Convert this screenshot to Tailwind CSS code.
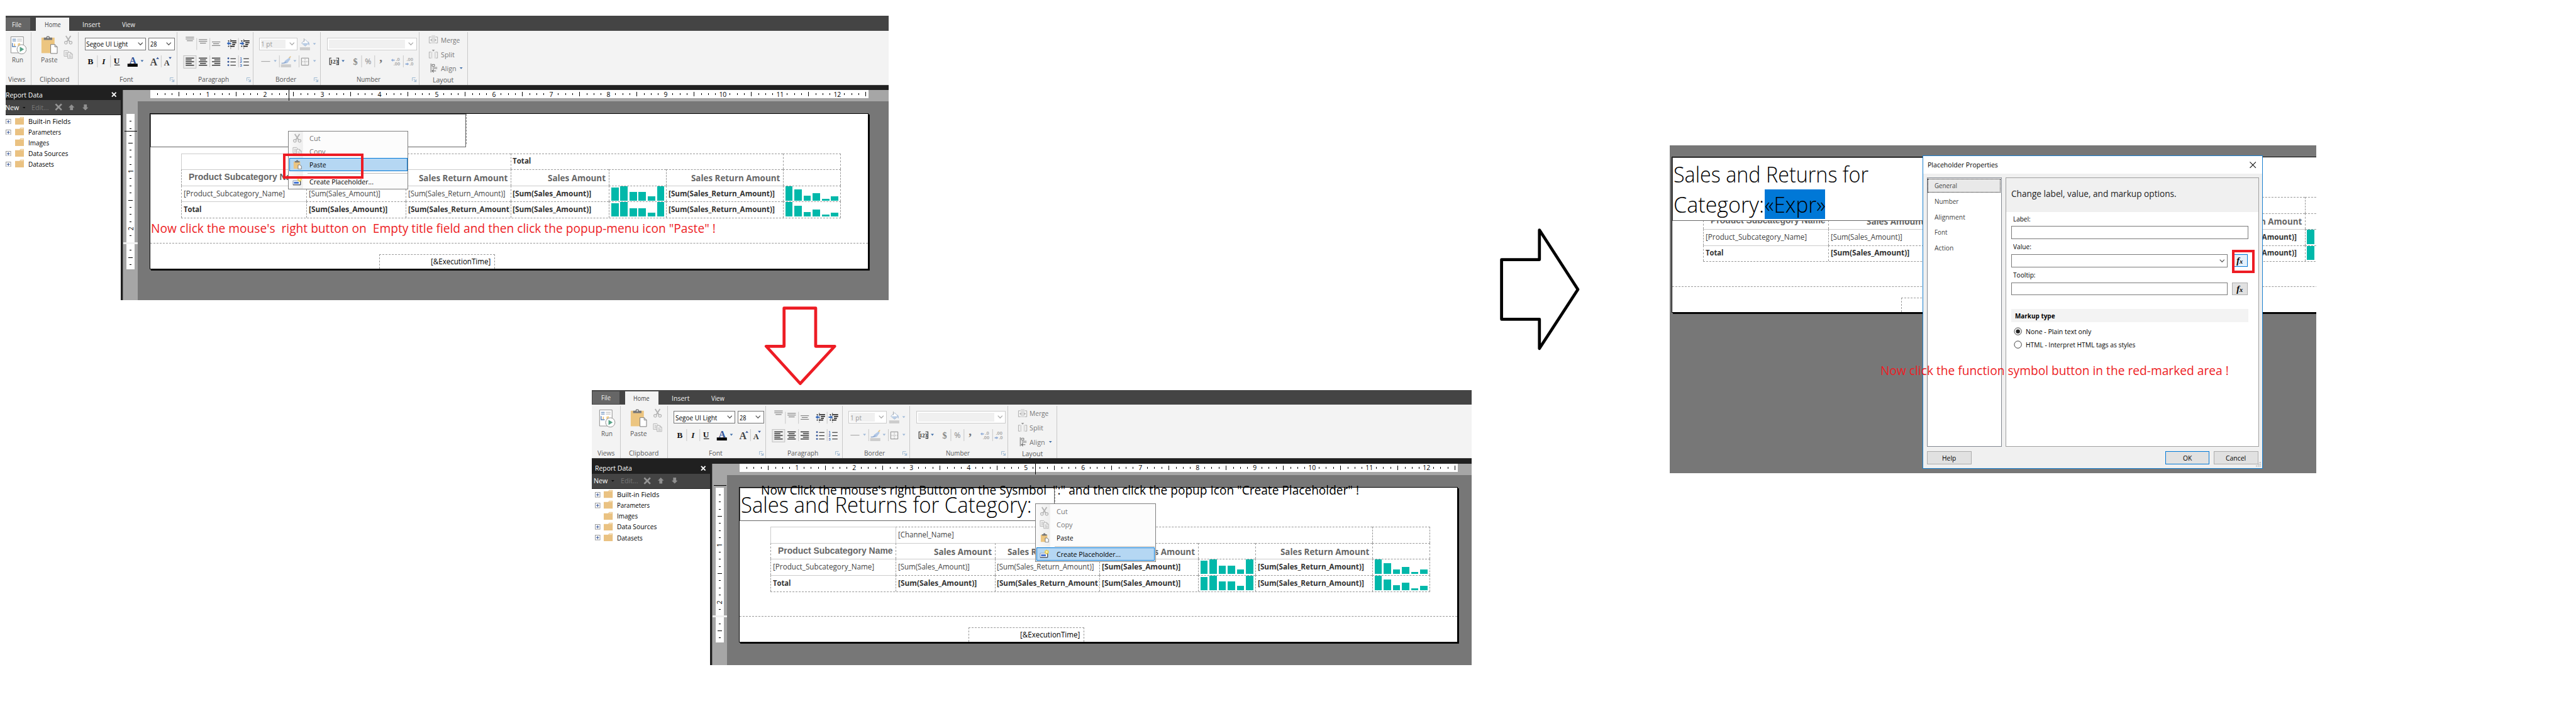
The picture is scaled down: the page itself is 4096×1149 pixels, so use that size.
<!DOCTYPE html>
<html lang="en">
<head>
<meta charset="utf-8">
<title>Report Builder walkthrough</title>
<script src="https://cdn.jsdelivr.net/npm/@tailwindcss/browser@4"></script>
</head>
<body class="bg-white overflow-hidden">
<div id="board" class="relative w-[4320px] h-[1211px] overflow-hidden bg-white [zoom:0.948148] font-['Open_Sans','Noto_Sans',sans-serif] text-[12px] leading-none text-black"></div>
<script>
// t: one line of text set to a given width
const t = (s, w, c = '') => `<span data-w="${w}" class="inline-block shrink-0 whitespace-pre origin-left ${c}">${s}</span>`;
const svg = (w, h, body, c = '') => `<svg width="${w}" height="${h}" viewBox="0 0 ${w} ${h}" class="block shrink-0 ${c}">${body}</svg>`;
const lines = (arr, col) => arr.map(a => `<rect x="${a[0]}" y="${a[1]}" width="${a[2]}" height="${a[3] || 1.1}" fill="${col}"/>`).join('');
const seps = (arr, y = 0, h = 20) => arr.map(x => `<rect x="${x}" y="${y}" width="1" height="${h}" fill="#c6c6c6"/>`).join('');
const arrow = (x, y, c) => `<path d="M${x} ${y}h5l-2.5 3z" fill="${c}"/>`;
const chevron = c => svg(9, 6, `<path d="M.7.7 4.5 4.5 8.3.7" fill="none" stroke="${c}" stroke-width="1.3"/>`);

const scissors = svg(16, 16, `<g fill="none" stroke="#b4b4b4"><path d="M4 1 10.500 11M12 1 5.500 11" stroke-width="2"/><circle cx="4" cy="12.500" r="2.300" stroke-width="1.300"/><circle cx="12" cy="12.500" r="2.300" stroke-width="1.300"/></g>`);
const copyIcon = svg(16, 16, `<g fill="#f3f3f3" stroke="#b4b4b4"><path d="M1 1.500h6l1.500 1.500v8H1z"/><path d="M7 4.500h5l3 3v7H7z"/><path d="M12 4.500v3h3M3 4.500h3M3 6.500h3M3 8.500h3M9 8.500h2M9 10.500h4.500M9 12.500h4.500" fill="none"/></g>`);
const pasteSmall = svg(16, 16, `<path d="M2 3h11v12H2z" fill="#ecc580"/><path d="M4 2h2.500V.5h3V2H12v2.500H4z" fill="#777"/><path d="M9.500 8.500h3l2.500 2V15.500H9.500z" fill="#fff" stroke="#777"/>`);
const placeholderIcon = svg(16, 16, `<path d="M1 6.500h12.500v7H1z" fill="#fff" stroke="#8a9ab8"/><path d="M13.500 7v6.500H1" fill="none" stroke="#333"/><path d="M2.500 8.500h8v3h-8z" fill="#3d6fd0"/><path d="M12 .5v8M8 4.500h8M9.200 1.700l5.600 5.600M14.800 1.700 9.200 7.300" stroke="#f2cf3c" stroke-width="1.400"/><circle cx="12" cy="4.500" r="1.500" fill="#fff6c0"/>`);

const group = (w, label, lw, body, launcher) => `
<div class="relative flex flex-col border-r border-[#c8c8c8] h-[88px] mt-[2px] ${w}">
  ${body}
  <div class="mt-auto mb-px h-[16px] flex items-center justify-center text-[#5a5a5a] ${launcher ? 'pr-1' : ''}">${t(label, lw)}</div>
  ${launcher ? `<div class="absolute right-[3px] bottom-1">${svg(8, 8, '<path d="M.5 6V.5H6" fill="none" stroke="#9db8d2"/><path d="M3 3l3.500 3.500M7 3.500V7H3.500" fill="none" stroke="#9db8d2" stroke-width="1.200"/>')}</div>` : ''}
</div>`;

const ribbon = () => `
<div class="flex h-[26px] bg-[#444] text-[#f0f0f0]">
  <div class="ml-[2px] mt-1 w-[45px] h-[21px] bg-[#666] flex items-center justify-center pr-2 pl-2">${t('File', 16)}</div>
  <div class="ml-[9px] mt-1 w-[56px] h-[22px] bg-[#f3f3f3] text-[#444] flex items-center justify-center">${t('Home', 27)}</div>
  <div class="ml-[22px] mt-1 h-[22px] flex items-center">${t('Insert', 30)}</div>
  <div class="ml-[37px] mt-1 h-[22px] flex items-center">${t('View', 22)}</div>
</div>
<div class="flex h-[90px] bg-[#f3f3f3] text-[#5a5a5a]">
${group('w-[49px]', 'Views', 29, `<div class="mt-[6px] flex flex-col items-center pl-1">
  ${svg(29, 32, `<path d="M2.500 1.500h21v27h-21z" fill="#fff" stroke="#8c8c8c"/><path d="M5 5.500h6M5 8.500h6" stroke="#3d6da8" stroke-width="1.200"/><path d="M13 5.500h8M13 8.500h8" stroke="#aaa"/><path d="M5 12v6h6" fill="none" stroke="#5b84b8" stroke-width="1.500"/><path d="M8 13h1.500v4H8z" fill="#eab765"/><path d="M14 13l4-1v5h-4z" fill="#f0cd8c"/><circle cx="20.500" cy="22.500" r="7.800" fill="#fff" stroke="#8c8c8c"/><path d="M17.500 18.200v8.600l7-4.300z" fill="#57a287"/>`)}
  <div class="mt-[2px]">${t('Run', 19)}</div></div>`)}
${group('w-[79px]', 'Clipboard', 50, `<div class="mt-[5px] ml-[12px] flex">
  <div class="flex flex-col items-center w-[36px]">${svg(30, 33, `<path d="M2 4h22v26H2z" fill="#ecc580"/><path d="M6 4h4l1-2.500h4L16 4h4v4H6z" fill="#777"/><circle cx="13" cy="4" r="1.200" fill="#fff"/><path d="M17.500 15.500h7l4 4v11h-11z" fill="#fff" stroke="#777"/><path d="M24.500 15.500v4h4" fill="none" stroke="#777"/>`)}<div class="mt-[2px]">${t('Paste', 28)}</div></div>
  <div class="ml-[6px] flex flex-col gap-[8px]">${scissors}${copyIcon}</div></div>`)}
${group('w-[165px]', 'Font', 23, `<div class="mt-[9px] ml-[10px] flex gap-1 text-black">
  <div class="w-[103px] h-[21px] bg-white border border-[#777] flex items-center justify-between pl-[2px] pr-1">${t('Segoe UI Light', 70)}${chevron('#555')}</div>
  <div class="w-[44px] h-[21px] bg-white border border-[#777] flex items-center justify-between pl-[2px] pr-1">${t('28', 11)}${chevron('#555')}</div></div>
  ${svg(164, 24, `<g font-family="Liberation Serif" font-weight="bold" fill="#111" text-anchor="middle"><text x="20" y="15" font-size="14">B</text><text x="42" y="15" font-size="14" font-style="italic">I</text><text x="64" y="14" font-size="14">U</text><rect x="60" y="15.500" width="9" height="1.200"/><text x="91" y="14" font-size="16" fill="#35569a">A</text><text x="126" y="17" font-size="17" fill="#444">A</text><text x="148" y="17" font-size="13" fill="#333">A</text></g><rect x="82" y="14" width="17" height="5" fill="#000"/>${seps([31, 53, 138])}${arrow(104, 8, '#3d6da8')}<path d="M130 6h5l-2.500-3zM151 3h5l-2.500 3z" fill="#35569a"/>`, 'mt-[9px]')}`, 1)}
${group('w-[128px]', 'Paragraph', 52, svg(127, 62,
  lines([[14,8,14],[14,11,14],[16,14,10],[36,12,14],[36,15,14],[38,18,10],[58,16,14],[60,19,10],[58,22,14]], '#777') +
  seps([32, 54, 102], 10, 20) + seps([54, 102], 39, 20) +
  `<rect x="10.500" y="39.500" width="21" height="21" fill="#ececec" stroke="#c0c0c0"/>` +
  lines([[14,44,14],[14,47,10],[14,50,14],[14,53,10],[14,56,14],[36,44,14],[38,47,10],[36,50,14],[38,53,10],[36,56,14],[58,44,14],[62,47,10],[58,50,14],[62,53,10],[58,56,14]].map(a=>[a[0],a[1]-1,a[2],1.2]), '#000') +
  [83, 105].map(x => lines([[x+6,14,10],[x+9,17,7],[x+9,20,5],[x+6,23,7],[x+2,14,2],[x+2,23,2]].map(a=>[a[0],a[1],a[2],1.6]), '#111') + `<path d="M${x+6.5} 12v16" stroke="#111" stroke-dasharray="1.500 1.500"/>`).join('') +
  `<path d="M83 19l4-3.500v2.500h3v2h-3v2.500zM112 19l-4-3.500v2.500h-3v2h3v2.500z" fill="#3567b8"/>` +
  lines([[89,44,9],[89,49.500,9],[89,55,9],[111,44,9],[111,49.500,9],[111,55,9]], '#222') +
  `<g fill="#35569a"><circle cx="85.500" cy="44" r="1.500"/><circle cx="85.500" cy="49.800" r="1.500"/><circle cx="85.500" cy="55.500" r="1.500"/></g><g font-family="Liberation Sans" font-weight="bold" font-size="6" fill="#3567b8"><text x="105" y="46">1</text><text x="105" y="52">2</text><text x="105" y="58">3</text></g>`), 1)}
${group('w-[113px]', 'Border', 35, `<div class="mt-[9px] ml-[10px] flex items-center text-[#999]">
  <div class="w-[64px] h-[21px] bg-white border border-[#ccc] flex items-center justify-between pl-[2px] pr-1"><div class="w-[41px] h-[15px] bg-[#f0f0f0] flex items-center">${t('1 pt', 19)}</div>${chevron('#aaa')}</div>
  ${svg(32, 21, `<path d="M7 9l6-6 6 6-6 5z" fill="#fff" stroke="#9fb3cc"/><path d="M8 9h10l-5 5z" fill="#b9cde6"/><path d="M11 1v6" stroke="#aaa"/><path d="M18 6q3 4 1.500 7-2-2-1.500-7" fill="#a9bfdc"/><rect x="4" y="16" width="17" height="5" fill="#ccc"/>${arrow(26, 9, '#9db8d8')}`)}</div>
  ${svg(112, 24, `<rect x="13" y="9.500" width="15" height="1.200" fill="#aaa"/>${arrow(34, 8, '#9db8d8')}${seps([43, 76])}<path d="M59 4l3-3 1 1-2.500 4z" fill="#e3c58c"/><path d="M53 9l7-5 2 2-5 7-7 1z" fill="#b2c8e6"/><path d="M47 13q4 1 8-2" stroke="#8fa8cf" stroke-width="1.500" fill="none"/><rect x="46" y="15" width="17" height="5" fill="#ccc"/>${arrow(67, 8, '#9db8d8')}<path d="M80.500 4.500h12v12h-12z" fill="none" stroke="#888"/><path d="M86.500 6v10M82 10.500h10" stroke="#999" stroke-dasharray="1.500 1.500"/>${arrow(100, 8, '#9db8d8')}`, 'mt-[9px]')}`, 1)}
${group('w-[165px]', 'Number', 40, `<div class="mt-[9px] ml-[11px] flex">
  <div class="w-[150px] h-[21px] bg-white border border-[#ccc] flex items-center justify-between pl-[2px] pr-1"><div class="w-[127px] h-[15px] bg-[#f0f0f0]"></div>${chevron('#aaa')}</div></div>
  ${svg(164, 24, `<path d="M18 4.500h-3v11h3M26 4.500h4v11h-4" fill="none" stroke="#333" stroke-width="1.200"/><g font-family="Liberation Serif" font-weight="bold" text-anchor="middle"><text x="22.500" y="14" font-size="9" fill="#222">123</text><text x="58" y="16" font-size="15" fill="#888">$</text><text x="101" y="11" font-size="20" fill="#777">,</text></g><text x="79.500" y="15" font-family="Open Sans" font-size="13" text-anchor="middle" fill="#888">%</text>${arrow(35, 8, '#3d6da8')}${seps([68, 90, 138])}<g font-family="Liberation Sans" font-weight="bold" font-size="8" fill="#aaa"><text x="126" y="10">.0</text><text x="122" y="17">.00</text><text x="144" y="10">.00</text><text x="149" y="17">.0</text></g><path d="M118 8l3-2.500V7h3v2h-3v1.500zM148 14.500l-3-2.500v1.500h-3v2h3V17z" fill="#8fabd6"/>`, 'mt-[9px]')}`, 1)}
${group('w-[82px]', 'Layout', 35, `<div class="mt-px ml-[15px] flex flex-col text-[#777]">
  <div class="h-6 flex items-center gap-1">${svg(17, 18, `<path d="M5 4H1.500v10H5M12 4h3.500v10H12" fill="none" stroke="#aaa"/><path d="M5.500 1h6v14h-6z" fill="#ddd"/><path d="M3 9l3-2v4zM14 9l-3-2v4z" fill="#aaa"/>`)}${t('Merge', 32)}</div>
  <div class="h-6 flex items-center gap-1">${svg(17, 18, `<path d="M5 5H1.500v10H5M12 5h3.500v10H12" fill="none" stroke="#aaa"/><path d="M4 4.500h3v11H4zM10 4.500h3v11h-3z" fill="#ddd"/><path d="M6 1h5L8.500 4z" fill="#999"/>`)}${t('Split', 23)}</div>
  <div class="h-6 flex items-center gap-1">${svg(17, 18, `<path d="M4.500 1v15" stroke="#666"/><path d="M6.500 2.500h4v3h-4z" fill="#fff" stroke="#666"/><rect x="7" y="6.500" width="8" height="4" fill="#bbb"/><path d="M6 13.500h7M9 11l-2.500 2.500L9 16" fill="none" stroke="#666" stroke-width="1.200"/>`)}${t('Align', 26)}${svg(8, 6, arrow(2, 1, '#3d6da8'))}</div></div>`)}
</div>
<div class="h-[9px] bg-[#202020] border-t border-[#444]"></div>`;

const treeRow = (s, w, plus) => `
<div class="h-[18px] flex items-center pl-[6px]">
  <div class="w-[10px] mt-px">${plus ? svg(9, 9, '<rect x=".5" y=".5" width="8" height="8" fill="#fff" stroke="#999"/><path d="M4.500 2v5M2 4.500h5" stroke="#3d5a9a" stroke-width="1.200"/>') : ''}</div>
  <div class="ml-[5px] mb-[2px]">${svg(15, 14, '<path d="M0 3h7.500L9 .7h6V14H0z" fill="#eac282"/><path d="M9 2.300h5" stroke="#fff" stroke-width=".8"/>')}</div>
  <div class="ml-[7px]">${t(s, w)}</div>
</div>`;

const dataPanel = () => `
<div class="w-[199px] flex flex-col">
  <div class="h-[17px] bg-[#202020] text-white flex items-center justify-between pl-[6px] pr-[7px] pb-[2px]">${t('Report Data', 62)}${svg(9, 9, '<path d="M1 1l7 7M8 1 1 8" stroke="#fff" stroke-width="2"/>')}</div>
  <div class="h-[25px] bg-[#444] border-b border-[#202020] text-white flex items-center pl-1">
    ${t('New', 23.5)}<div class="ml-[6px] mt-px">${svg(5, 3, arrow(0, 0, '#111'))}</div>
    <div class="ml-[10px] text-[#777]">${t('Edit...', 29)}</div>
    <div class="ml-[10px]">${svg(13, 13, '<path d="M1.500 1.500l10 10M11.500 1.500l-10 10" stroke="#969696" stroke-width="2.800"/>')}</div>
    <div class="ml-[11px]">${svg(10, 10, '<path d="M5 0l5 5H7.500v5h-5V5H0z" fill="#909090"/>')}</div>
    <div class="ml-[13px]">${svg(10, 10, '<path d="M5 10l5-5H7.500V0h-5v5H0z" fill="#909090"/>')}</div>
  </div>
  <div class="grow bg-white pt-px">
    ${treeRow('Built-in Fields', 71, 1)}${treeRow('Parameters', 55, 1)}${treeRow('Images', 35, 0)}${treeRow('Data Sources', 67, 1)}${treeRow('Datasets', 43, 1)}
  </div>
</div>`;

const tick = k => k % 8 === 0 ? `<span class="text-[11px]">${k / 8}</span>`
  : k % 8 === 4 ? '<i class="h-[7px] border-l border-black"></i>' : '<i class="h-[3px] border-l border-black"></i>';
const vtick = k => k % 8 === 0 ? `<span class="text-[11px] -rotate-90">${k / 8}</span>`
  : k % 8 === 4 ? '<i class="w-[7px] border-t border-black"></i>' : '<i class="w-[3px] border-t border-black"></i>';
const range = n => Array.from({ length: n }, (_, i) => i + 1);

const hRuler = () => `<div class="h-[19px] bg-[#a6a6a6] pl-[45px]"><div class="w-[1205px] h-[14px] bg-white flex pl-[6.500px]">
${range(100).map(k => `<div class="w-3 shrink-0 flex items-center justify-center overflow-visible">${tick(k)}</div>`).join('')}</div></div>`;
const vRuler = () => `<div class="relative w-6 shrink-0 bg-[#a6a6a6] pl-[5px] pt-[21px]"><div class="w-[14px] h-[260px] bg-white flex flex-col pt-[6.500px]">
${range(21).map(k => `<div class="h-3 shrink-0 flex items-center justify-center">${k === 18 ? '' : vtick(k)}</div>`).join('')}</div>
<div class="absolute left-0 top-[236px] w-6 h-[3px] bg-[#f0f0f0]"></div></div>`;

// cell edges: s = solid hairline, d = dashed; first letter is the top edge, second the left one
const edge = {
  ss: 'border-t border-l border-[#ccc]',
  sd: 'border-t border-l border-t-[#ccc] border-l-[#999] [border-left-style:dashed]',
  ds: 'border-t border-l border-t-[#999] border-l-[#ccc] [border-top-style:dashed]',
  dd: 'border-t border-l border-dashed border-[#999]',
};
const cell = (e, body, c = '') => `<div class="h-[27px] overflow-hidden flex items-center pl-[3px] pb-px ${edge[e]} ${c}">${body}</div>`;
const bars = hs => `<div class="w-[89px] h-[25px] flex items-end gap-[3px]">${hs.map(h => `<i class="grow basis-0 bg-[#01b8aa]" style="height:${h}px"></i>`).join('')}</div>`;
const head = (s, w) => t(s, w, 'text-[14.500px] font-bold text-[#666]');
const body = (s, w, b) => t(s, w, b ? 'text-[13px] font-bold text-[#333]' : 'text-[13px] text-[#444]');
const A = [22, 24, 14, 14, 7, 24], B = [24, 18, 8, 12, 3, 7];
const hc = 'justify-end pr-[5px] pt-[2px]', bc = 'items-end! pb-[2px]!';
const table = () => `
<div class="absolute left-[52px] top-[66px] w-[1106px] grid grid-cols-[210px_166px_176px_165px_96px_196px_97px] border-b border-dashed border-[#999]">
  ${cell('ss', '')}${cell('ds', body('[Channel_Name]', 93.500), 'col-span-2')}${cell('dd', body('Total', 31, 1), 'col-span-3 pb-[3px]')}${cell('dd', '', 'border-r')}
  ${cell('sd', t('Product Subcategory Name', 192.500, "text-[14.500px] font-bold text-[#666] font-['Liberation_Sans']"), 'justify-end pr-[5px] pb-[2px]')}
  ${cell('sd', head('Sales Amount', 97), hc)}${cell('sd', head('Sales Return Amount', 149), hc)}${cell('dd', head('Sales Amount', 97), hc)}${cell('dd', '')}${cell('dd', head('Sales Return Amount', 149), hc)}${cell('dd', '', 'border-r')}
  ${cell('sd', body('[Product_Subcategory_Name]', 170))}${cell('sd', body('[Sum(Sales_Amount)]', 120))}${cell('sd', body('[Sum(Sales_Return_Amount)]', 163))}${cell('sd', body('[Sum(Sales_Amount)]', 132, 1))}${cell('dd', bars(A), bc)}${cell('sd', body('[Sum(Sales_Return_Amount)]', 178, 1))}${cell('dd', bars(B), 'border-r ' + bc)}
  ${cell('sd', body('Total', 30, 1))}${cell('dd', body('[Sum(Sales_Amount)]', 132, 1))}${cell('dd', `<div class="w-[171px] h-5 flex items-center overflow-hidden">${body('[Sum(Sales_Return_Amount)]', 178, 1)}</div>`)}${cell('dd', body('[Sum(Sales_Amount)]', 132, 1))}${cell('dd', bars(A), bc)}${cell('dd', body('[Sum(Sales_Return_Amount)]', 178, 1))}${cell('dd', bars(B), 'border-r ' + bc)}
</div>`;

const titleBox = inner => `
<div class="absolute left-[529px] top-0 h-[50px] border-l border-dashed border-[#999]"></div>
<div class="absolute left-0 top-0 w-[529px] h-[56px] border border-[#666] bg-white">${inner}</div>`;

const page = title => `
<div class="absolute left-5 top-5 w-[1206px] h-[261px] bg-white border border-black shadow-[2px_2px_0_#000]">
  ${table()}
  <div class="absolute left-0 top-[216px] w-full border-t border-dashed border-[#999]"></div>
  <div class="absolute left-[384px] top-[235px] w-[194px] h-[24px] border border-b-0 border-dashed border-[#999] flex items-center justify-end pr-[6px]">${t('[&amp;ExecutionTime]', 100.500, 'text-[13px]')}</div>
  ${title}
</div>`;

const menuRow = (icon, s, w, on, off) => `
<div class="h-[22px] mx-px flex items-center border ${on ? 'bg-[#b5d7f3] border-[#0078d7]' : 'border-transparent'} ${off ? 'text-[#777]' : 'text-black'}">
  <div class="w-[22px] pl-[4px]">${icon}</div><div class="ml-[11px]">${t(s, w)}</div></div>`;
const menu = (pos, pasteOn) => `
<div class="absolute ${pos} w-[202px] h-[98px] border border-[#808080] bg-[#fcfcfc] bg-[linear-gradient(90deg,#fafafa,#eee)] bg-size-[24px_100%] bg-no-repeat pt-px">
  ${menuRow(scissors, 'Cut', 18.500, 0, 1)}${menuRow(copyIcon, 'Copy', 27, 0, 1)}${menuRow(pasteSmall, 'Paste', 28, pasteOn, 0)}
  <div class="h-[6px] pt-[3px]"><div class="ml-8 mr-px border-t border-[#bbb]"></div></div>
  ${menuRow(placeholderIcon, 'Create Placeholder...', 107.500, !pasteOn, 0)}
</div>`;

// report builder window: ribbon, data panel, rulers and design surface
const builder = (title, overlay) => `
<div class="relative w-[1486px] flex flex-col">
  ${ribbon()}
  <div class="flex h-[352px]">
    ${dataPanel()}
    <div class="w-1 shrink-0 bg-[#202020] border-r border-[#777]"></div>
    <div class="w-[1283px] flex flex-col">${hRuler()}
      <div class="flex grow">${vRuler()}<div class="relative grow bg-[#777]">${page(title)}</div></div>
    </div>
  </div>
  ${overlay}
</div>`;

const note = (pos, s, w, c) => `<div class="absolute ${pos} ${c}">${t(s, w, 'text-[21px] font-normal')}</div>`;
const input = (c, inner = '') => `<div class="border border-[#7a7a7a] bg-white flex items-center justify-end ${c}">${inner}</div>`;
const fx = c => `<div class="w-[26px] h-[21px] border flex items-center justify-center ${c}"><span class="font-['Liberation_Serif'] font-bold italic text-[15px]">f<span class="text-[11px]">x</span></span></div>`;
const btn = (c, s, w) => `<div class="w-[74px] h-[22px] bg-[#e1e1e1] flex items-center justify-center ${c}">${t(s, w)}</div>`;
const nav = (s, w, on) => `<div class="h-[24px] mb-[2px] mx-px pl-[10px] flex items-center text-[#444] border ${on ? 'bg-[#e9e9e9] border-dotted border-black' : 'border-transparent'}">${t(s, w)}</div>`;

const dialog = `
<div class="absolute left-[3224px] top-[260px] w-[571px] h-[526px] border border-[#1a80d0] bg-[#f0f0f0] flex flex-col">
  <div class="h-[30px] bg-white flex items-center justify-between pl-2 pr-[10px]">${t('Placeholder Properties', 118)}${svg(11, 11, '<path d="M.5.5l10 10M10.500.5l-10 10" stroke="#111" stroke-width="1.100"/>')}</div>
  <div class="flex gap-[6px] pl-[6px] pt-[6px]">
    <div class="w-[126px] h-[452px] bg-white border border-[#828790] pt-px">
      ${nav('General', 38, 1)}${nav('Number', 40.500)}${nav('Alignment', 51.500)}${nav('Font', 21.500)}${nav('Action', 32)}
    </div>
    <div class="w-[425px] h-[452px] bg-white border border-[#a0a0a0] flex flex-col">
      <div class="h-[57px] bg-[#f0f0f0] flex items-center pl-[9px] pb-[5px]">${t('Change label, value, and markup options.', 277, 'text-[15.500px] text-[#222]')}</div>
      <div class="pl-[9px] flex flex-col">
        <div class="h-[24px] flex items-center pl-[3px]">${t('Label:', 29)}</div>
        ${input('w-[397px] h-[22px]')}
        <div class="h-[25px] flex items-center pl-[3px]">${t('Value:', 30.500)}</div>
        <div class="flex items-center h-[22px] gap-[7px]">${input('w-[363px] h-[22px] pr-1', chevron('#555'))}${fx('bg-[#e5f1fb] border-[#0078d7]')}</div>
        <div class="h-[25px] flex items-center pl-[3px]">${t('Tooltip:', 37.500)}</div>
        <div class="flex items-center h-[22px] gap-[7px]">${input('w-[363px] h-[22px]')}${fx('bg-[#e1e1e1] border-[#adadad]')}</div>
        <div class="mt-[23px] w-[397px] h-[22px] bg-[#f3f3f3] flex items-center pl-[6px] font-bold">${t('Markup type', 67)}</div>
        <div class="mt-[4px] pl-1 h-[22px] flex items-center gap-[6px]">${svg(14, 14, '<circle cx="7" cy="7" r="6" fill="#fff" stroke="#333"/><circle cx="7" cy="7" r="3.400" fill="#222"/>')}${t('None - Plain text only', 110)}</div>
        <div class="mt-px pl-1 h-[22px] flex items-center gap-[6px]">${svg(14, 14, '<circle cx="7" cy="7" r="6" fill="#fff" stroke="#333"/>')}${t('HTML - Interpret HTML tags as styles', 184)}</div>
      </div>
    </div>
  </div>
  <div class="mt-[7px] flex pl-[7px]">
    ${btn('border border-[#adadad]', 'Help', 23.500)}${btn('ml-[325px] border-2 border-[#0078d7]', 'OK', 15)}${btn('ml-[8px] border border-[#adadad]', 'Cancel', 34)}
  </div>
  <div class="absolute right-[2px] bottom-[2px]">${svg(9, 9, '<path d="M6 0h2v2H6zM6 3h2v2H6zM6 6h2v2H6zM3 3h2v2H3zM3 6h2v2H3zM0 6h2v2H0z" fill="#bbb"/>')}</div>
</div>`;

const bigTitle = `<div class="absolute left-[1px] top-[9px]">${t('Sales and Returns for Category:', 488, 'text-[37.300px] font-light')}</div>`;
const bigTitle3 = `<div class="absolute left-0 top-0 w-[529px] h-[106px] border border-[#666] bg-white pt-[2px] pl-px text-[37.300px] leading-[50px] font-light">
  <div>${t('Sales and Returns for', 327)}</div><div class="flex">${t('Category:', 152)}<span class="ml-px w-[102px] bg-[#0078d7]">${t('«Expr»', 102)}</span></div></div>`;

document.getElementById('board').innerHTML = `
<div class="absolute left-[10px] top-[26px] w-[1480px] h-[477px] overflow-hidden"><div class="-ml-[6px]">
  ${builder(titleBox(''), `
    <div class="absolute left-[480px] top-[125px] h-[18px] border-l border-black"></div>
    <div class="absolute left-[205px] top-[193px] w-[21px] border-t border-black"></div>
    ${menu('left-[479px] top-[193px]', 1)}
    <div class="absolute left-[471px] top-[231px] w-[135px] h-[43px] border-5 border-[#ed1c24]"></div>`)}
</div></div>
${note('left-[253.500px] top-[372.500px]', `Now click the mouse's  right button on  Empty title field and then click the popup-menu icon "Paste" !`, 947, 'text-[#ed1c24]')}
<div class="absolute left-[1280px] top-[508px]">${svg(126, 142, '<path d="M34.500 8h53v64h32L61.500 134.500 4.500 72h30z" fill="#fff" stroke="#ed1c24" stroke-width="5" stroke-linejoin="round"/>')}</div>
<div class="absolute left-[992px] top-[654px] w-[1476px] h-[461px] overflow-hidden"><div class="-mt-[2px]">
  ${builder(titleBox(bigTitle), `
    <div class="absolute left-[744px] top-[125px] h-[18px] border-l border-black"></div>
    <div class="absolute left-[205px] top-[161px] w-[21px] border-t border-black"></div>
    ${menu('left-[744px] top-[192px]', 0)}`)}
</div></div>
${note('left-[1276px] top-[811px]', `Now Click the mouse's right Button on the Sysmbol  ":" and then click the popup Icon "Create Placeholder" !`, 1003, 'text-black')}
<div class="absolute left-[2510px] top-[378px]">${svg(144, 216, '<path d="M8 57.500h63.500V8L136 107.500 71.500 206.500v-49H8z" fill="none" stroke="#000" stroke-width="5" stroke-linejoin="round"/>')}</div>
<div class="absolute left-[2800px] top-[244px] w-[1084px] h-[549px] overflow-hidden bg-[#777]"><div class="relative -ml-[17px] -mt-px w-[1300px] h-[560px]">${page(bigTitle3)}</div></div>
${dialog}
<div class="absolute left-[3743px] top-[419px] w-[38px] h-[39px] border-5 border-[#ed1c24]"></div>
${note('left-[3154px] top-[611px]', 'Now click the function symbol button in the red-marked area !', 584, 'text-[#ed1c24]')}
`;

// condense or widen each label to its column width, again whenever the styles settle
const board = document.getElementById('board');
const spans = [...board.querySelectorAll('[data-w]')];
function fit() {
  spans.forEach(e => { e.style.width = 'max-content'; e.style.transform = 'none'; });
  const k = board.getBoundingClientRect().width / 4320;
  const natural = spans.map(e => e.getBoundingClientRect().width / k);
  spans.forEach((e, i) => {
    e.style.width = e.dataset.w + 'px';
    e.style.transform = `scaleX(${e.dataset.w / natural[i]})`;
  });
}
fit();
new ResizeObserver(fit).observe(board);
addEventListener('load', fit);
document.fonts.ready.then(fit);
setTimeout(fit, 100);
</script>
</body>
</html>
